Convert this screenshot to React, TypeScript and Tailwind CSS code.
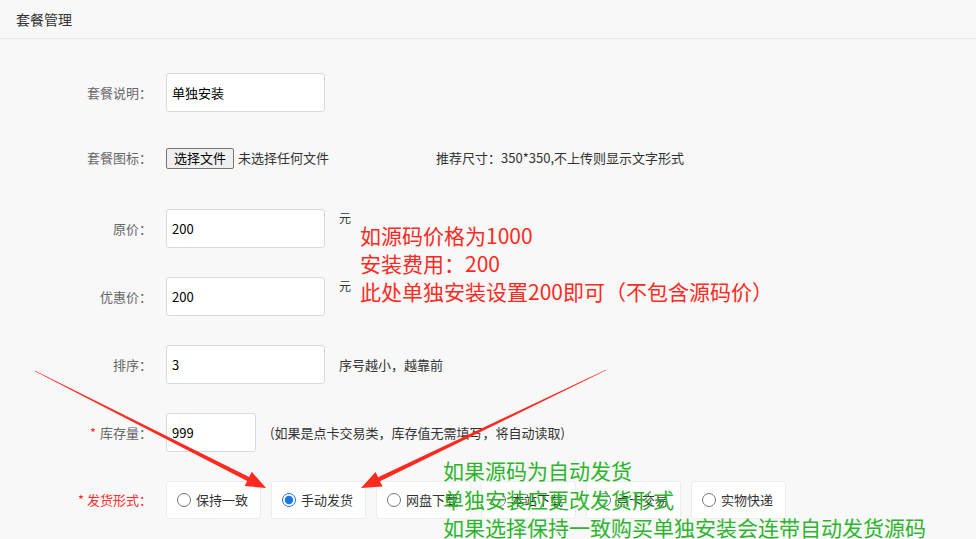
import React from 'react';

const font = { fontFamily: '"Noto Sans CJK SC", "Noto Sans", sans-serif' };

// tapered arrow drawn as a polygon, thin at the tail
const arrowPoints = (x1: number, y1: number, x2: number, y2: number) => {
    const dx = x2 - x1;
    const dy = y2 - y1;
    const len = Math.hypot(dx, dy);
    const ux = dx / len;
    const uy = dy / len;
    const px = -uy;
    const py = ux;
    const headLen = 20;
    const headW = 8;
    const bx = x2 - ux * headLen;
    const by = y2 - uy * headLen;
    const shaft = (x: number, y: number, w: number) => [x + px * w, y + py * w, x - px * w, y - py * w];
    const [s1x, s1y, s2x, s2y] = shaft(x1, y1, 0.3);
    const [e1x, e1y, e2x, e2y] = shaft(bx, by, 2.2);
    const [h1x, h1y, h2x, h2y] = shaft(bx, by, headW);
    return [
        [s1x, s1y], [e1x, e1y], [h1x, h1y], [x2, y2], [h2x, h2y], [e2x, e2y], [s2x, s2y],
    ].map(p => p.join(',')).join(' ');
};

const Label = ({ children, star, red }: { children: React.ReactNode; star?: boolean; red?: boolean }) => (
    <div className={`w-[152px] shrink-0 text-right text-[13px] ${red ? 'text-[#ff2a2a]' : 'text-[#666]'}`}>
        {star && <span className="text-[#ff2a2a] mr-1">*</span>}
        {children}
    </div>
);

const TextBox = ({ value, w = 'w-[159px]' }: { value: string; w?: string }) => (
    <div className={`${w} h-[39px] bg-white border border-[#d9d9d9] rounded-[3px] flex items-center px-[5px] text-[13px] text-black`}>
        {value}
    </div>
);

const options = ['保持一致', '手动发货', '网盘下载', '本站下载', '点卡交易', '实物快递'];

export default function App() {
    return (
        <div className="relative w-[976px] h-[539px] overflow-hidden bg-[#f8f8f8]" style={font}>
            <div className="h-[39px] border-b border-[#e8e8e8] px-4 flex items-center text-[14px] text-[#333]">
                套餐管理
            </div>

            <div className="pt-[34px] flex flex-col">
                <div className="h-[39px] mb-[29px] flex items-center gap-[14px]">
                    <Label>套餐说明：</Label>
                    <TextBox value="单独安装" />
                </div>

                <div className="h-[34px] mb-[34px] flex items-center gap-[14px]">
                    <Label>套餐图标：</Label>
                    <div className="flex items-center text-[13px] text-[#333]">
                        <div className="h-[21px] px-[7px] flex items-center bg-[#efefef] border border-[#767676] rounded-[2px] text-black">选择文件</div>
                        <span className="ml-[4px] w-[198px]">未选择任何文件</span>
                        <span>推荐尺寸：350*350,不上传则显示文字形式</span>
                    </div>
                </div>

                <div className="h-[39px] mb-[29px] flex items-start gap-[14px]">
                    <div className="h-[39px] flex items-center"><Label>原价：</Label></div>
                    <TextBox value="200" />
                    <span className="text-[12px] text-[#333] leading-none pt-[3px]">元</span>
                </div>

                <div className="h-[39px] mb-[29px] flex items-start gap-[14px]">
                    <div className="h-[39px] flex items-center"><Label>优惠价：</Label></div>
                    <TextBox value="200" />
                    <span className="text-[12px] text-[#333] leading-none pt-[3px]">元</span>
                </div>

                <div className="h-[39px] mb-[29px] flex items-center gap-[14px]">
                    <Label>排序：</Label>
                    <TextBox value="3" />
                    <span className="text-[13px] text-[#333]">序号越小，越靠前</span>
                </div>

                <div className="h-[39px] mb-[29px] flex items-center gap-[14px]">
                    <Label star>库存量：</Label>
                    <TextBox value="999" w="w-[90px]" />
                    <span className="text-[13px] text-[#333]">(如果是点卡交易类，库存值无需填写，将自动读取)</span>
                </div>

                <div className="h-[38px] flex items-center gap-[14px]">
                    <Label red>* 发货形式：</Label>
                    <div className="flex gap-[10px]">
                        {options.map(o => (
                            <label key={o} className="w-[95px] h-[38px] bg-white border border-[#ececec] rounded-[3px] flex items-center pl-[10px] gap-[5px] text-[13px] text-[#333]">
                                <input type="radio" name="ship" defaultChecked={o === '手动发货'} className="w-[14px] h-[14px] m-0 accent-[#1a73e8]" />
                                {o}
                            </label>
                        ))}
                    </div>
                </div>
            </div>

            {/* annotations */}
            <div className="absolute left-[360px] top-[221px] text-[21px] leading-[28px] text-[#ff2a1f]">
                <div>如源码价格为1000</div>
                <div>安装费用：200</div>
                <div>此处单独安装设置200即可（不包含源码价）</div>
            </div>

            <svg className="absolute inset-0 pointer-events-none" width="976" height="539">
                <polygon points={arrowPoints(35, 371, 266, 488)} fill="#ff2a1f" />
                <polygon points={arrowPoints(606, 370, 361, 488)} fill="#ff2a1f" />
            </svg>

            <div className="absolute left-[443px] top-[456px] text-[21px] leading-[28.5px] text-[#2cb52c]">
                <div>如果源码为自动发货</div>
                <div>单独安装应更改发货形式</div>
                <div>如果选择保持一致购买单独安装会连带自动发货源码</div>
            </div>
        </div>
    );
}
